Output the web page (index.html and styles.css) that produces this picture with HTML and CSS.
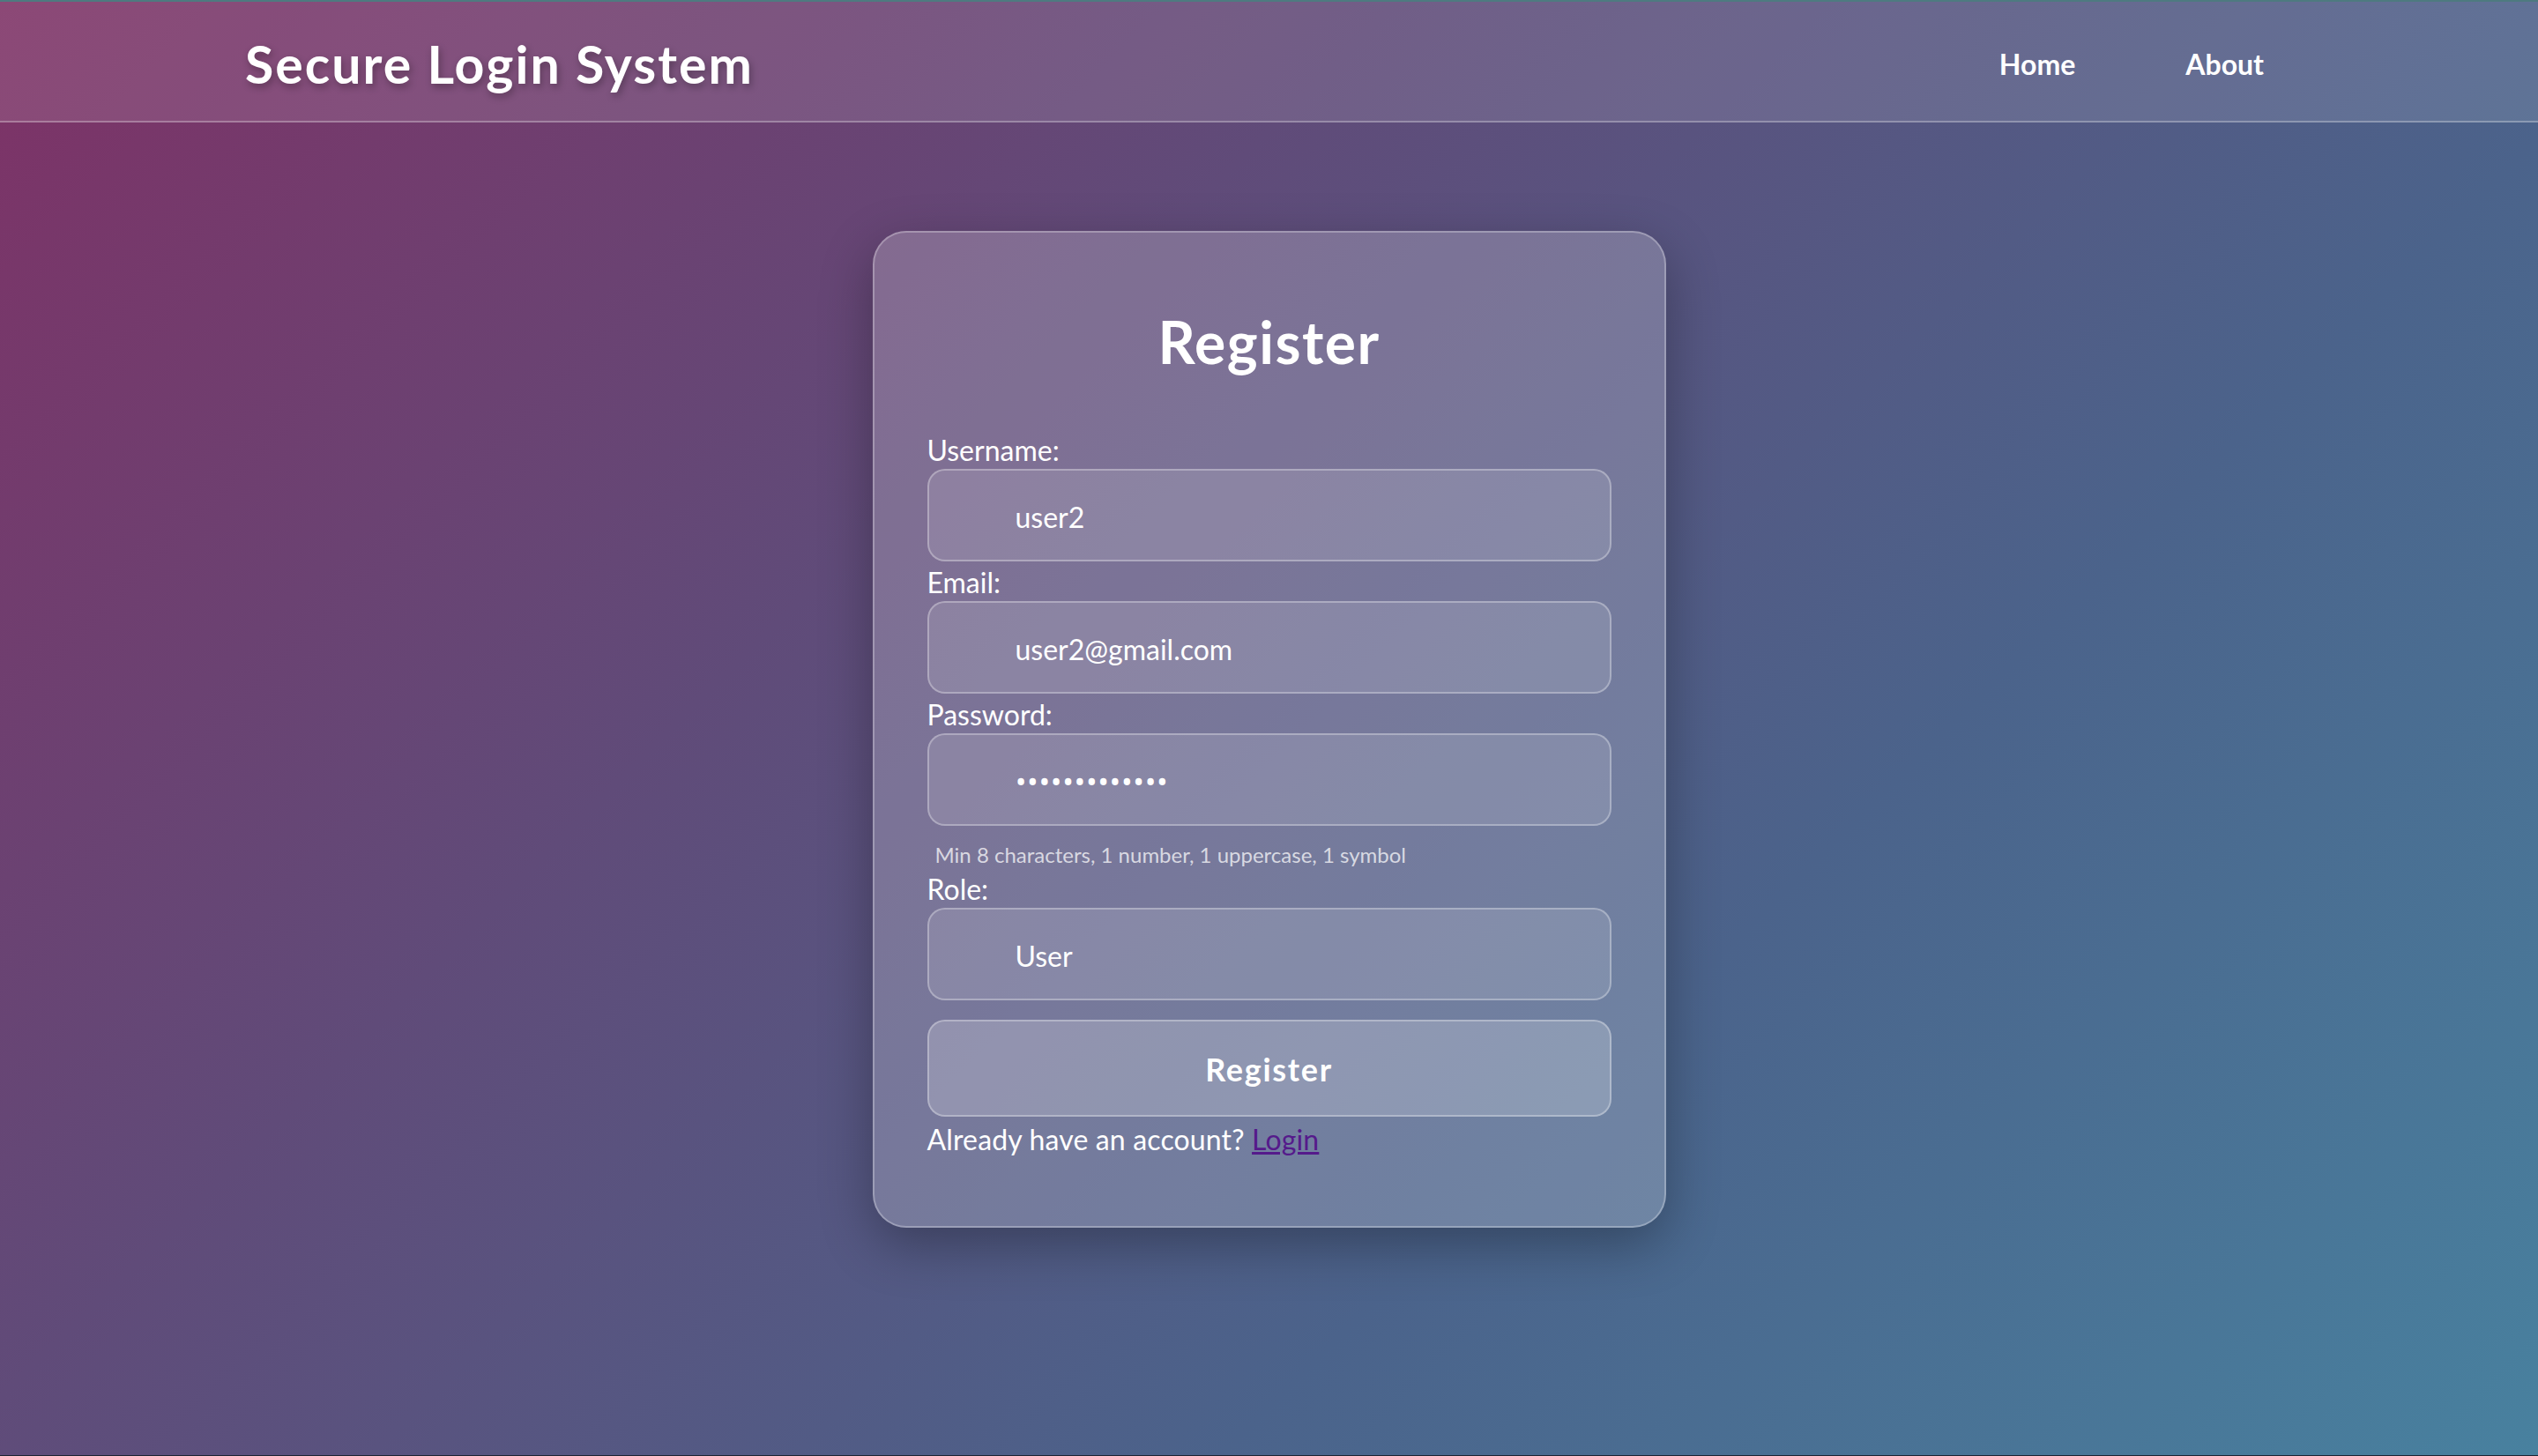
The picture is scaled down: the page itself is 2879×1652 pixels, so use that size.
FILE: index.html
```html
<!DOCTYPE html>
<html lang="en">
<head>
<meta charset="utf-8">
<title>Register - Secure Login System</title>
<link rel="stylesheet" href="styles.css">
</head>
<body>
<div class="page">
  <header class="topbar">
    <div class="brand">Secure Login System</div>
    <nav class="nav">
      <a href="#" class="nav-link">Home</a>
      <a href="#" class="nav-link">About</a>
    </nav>
  </header>
  <main class="main">
    <section class="card">
      <h2 class="card-title">Register</h2>
      <form class="form">
        <label class="field-label" for="username">Username:</label>
        <input class="field" id="username" type="text" value="user2">
        <label class="field-label" for="email">Email:</label>
        <input class="field" id="email" type="email" value="user2@gmail.com">
        <label class="field-label" for="password">Password:</label>
        <input class="field password" id="password" type="password" value="Password1234!">
        <div class="hint">Min 8 characters, 1 number, 1 uppercase, 1 symbol</div>
        <label class="field-label" for="role">Role:</label>
        <select class="field select" id="role">
          <option>User</option>
          <option>Admin</option>
        </select>
        <button type="button" class="submit">Register</button>
      </form>
      <p class="switch">Already have an account? <a href="#" class="switch-link">Login</a></p>
    </section>
  </main>
</div>
</body>
</html>
```
FILE: styles.css
```css
html, body {
  margin: 0;
  padding: 0;
}

body {
  font-family: "Lato", "Open Sans", "Liberation Sans", sans-serif;
  color: #ffffff;
}

.page {
  box-sizing: border-box;
  min-height: 1652px;
  border-top: 2px solid #4e7a80;
  border-bottom: 1px solid #1e2433;
  background: linear-gradient(135deg, #7e3266 0%, #604b79 35%, #4b638b 67%, #48819f 100%);
  display: flex;
  flex-direction: column;
}

.topbar {
  box-sizing: border-box;
  height: 137px;
  padding: 6px 311px 0 278px;
  display: flex;
  align-items: center;
  justify-content: space-between;
  background: rgba(255, 255, 255, 0.11);
  border-bottom: 2px solid rgba(255, 255, 255, 0.28);
}

.brand {
  font-size: 59px;
  font-weight: 700;
  letter-spacing: 2px;
  line-height: 70px;
  text-shadow: 2px 4px 8px rgba(0, 0, 0, 0.3);
}

.nav {
  display: flex;
  gap: 125px;
}

.nav-link {
  color: #ffffff;
  text-decoration: none;
  font-size: 32px;
  font-weight: 700;
  line-height: 44px;
}

.main {
  display: flex;
  justify-content: center;
  padding-top: 123px;
}

.card {
  box-sizing: border-box;
  width: 900px;
  padding: 60px 60px 58px;
  border: 2px solid rgba(255, 255, 255, 0.28);
  border-radius: 38px;
  background: rgba(255, 255, 255, 0.2);
  box-shadow: 0 20px 60px rgba(0, 0, 0, 0.3);
}

.card-title {
  margin: 20px 0 55px;
  text-align: center;
  font-size: 66px;
  font-weight: 700;
  letter-spacing: 1.5px;
  line-height: 88px;
}

.form {
  display: flex;
  flex-direction: column;
}

.field-label {
  display: block;
  padding-top: 3px;
  font-size: 32px;
  line-height: 42px;
}

.field {
  box-sizing: border-box;
  width: 100%;
  height: 105px;
  margin: 0;
  padding: 3px 20px 0 98px;
  border: 2px solid rgba(255, 255, 255, 0.3);
  border-radius: 20px;
  background: rgba(255, 255, 255, 0.12);
  color: #ffffff;
  font-family: inherit;
  font-size: 32px;
  outline: none;
}

.password {
  font-family: "Open Sans", "Liberation Sans", sans-serif;
  font-size: 35px;
  letter-spacing: 0.2px;
}

.select {
  appearance: none;
  -webkit-appearance: none;
}

.select option {
  color: #000000;
}

.hint {
  margin-top: 18px;
  padding-left: 9px;
  font-size: 24px;
  line-height: 30px;
  color: rgba(255, 255, 255, 0.72);
}

.submit {
  box-sizing: border-box;
  width: 100%;
  height: 110px;
  margin-top: 22px;
  padding-top: 3px;
  border: 2px solid rgba(255, 255, 255, 0.3);
  border-radius: 20px;
  background: rgba(255, 255, 255, 0.2);
  color: #ffffff;
  font-family: inherit;
  font-size: 36px;
  font-weight: 700;
  letter-spacing: 1.7px;
  cursor: pointer;
}

.switch {
  margin: 0 0 17px;
  padding-top: 3px;
  font-size: 32px;
  letter-spacing: 0.15px;
  line-height: 46px;
}

.switch-link {
  color: #551a8b;
  text-decoration: underline;
}
```
